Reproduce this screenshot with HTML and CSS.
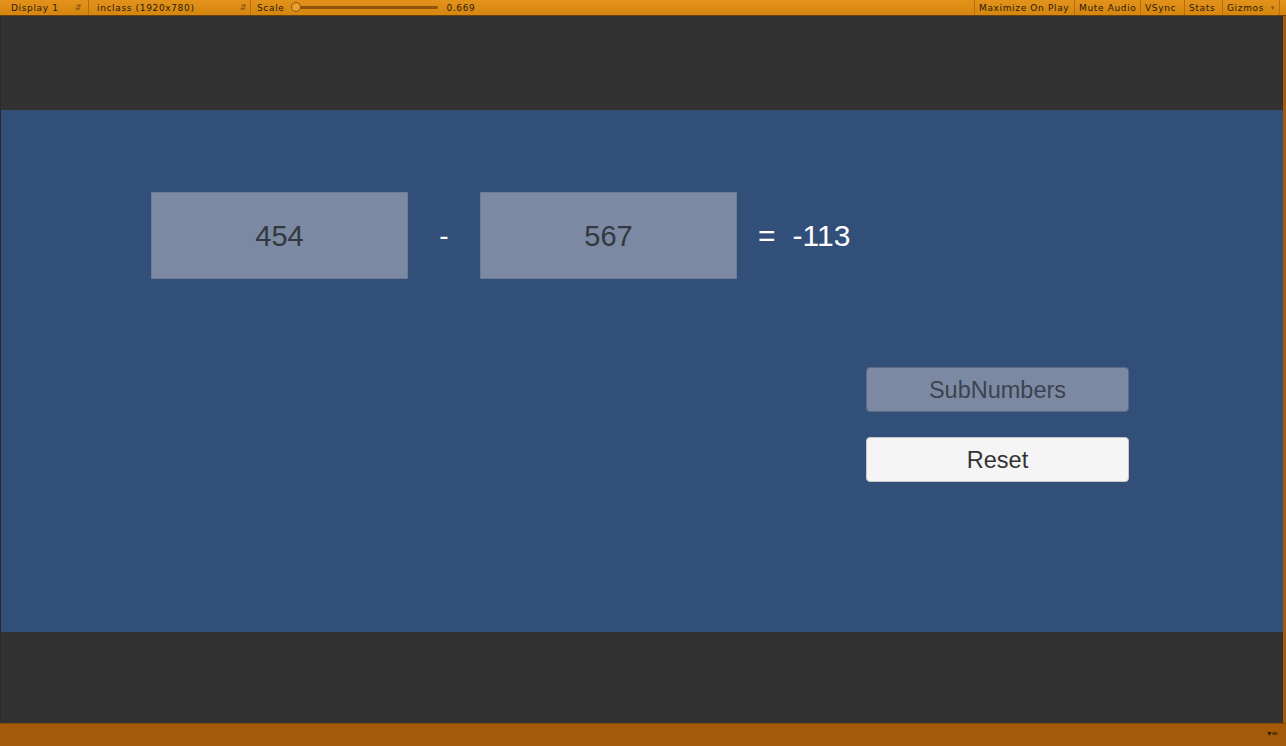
FILE: index.html
```html
<!DOCTYPE html>
<html>
<head>
<meta charset="utf-8">
<link rel="stylesheet" href="styles.css">
</head>
<body>
<div class="window">
  <div class="toolbar">
    <div class="tb-left">
      <div class="tb-item drop w-display"><span>Display 1</span><span class="updown">&#8693;</span></div>
      <div class="tb-item drop w-res"><span>inclass (1920x780)</span><span class="updown">&#8693;</span></div>
      <div class="tb-item scale">
        <span>Scale</span>
        <div class="slider"><div class="knob"></div></div>
        <span class="scale-val">0.669</span>
      </div>
    </div>
    <div class="tb-right">
      <div class="tb-btn w-max">Maximize On Play</div>
      <div class="tb-btn w-mute">Mute Audio</div>
      <div class="tb-btn w-vsync">VSync</div>
      <div class="tb-btn w-stats">Stats</div>
      <div class="tb-btn gizmos">Gizmos <span class="tri">&#9662;</span></div>
    </div>
  </div>
  <div class="view">
    <div class="letterbox top"></div>
    <div class="canvas">
      <div class="calc-row">
        <div class="field">454</div>
        <div class="op">-</div>
        <div class="field">567</div>
        <div class="result"><span class="eq">=</span><span class="val">-113</span></div>
      </div>
      <div class="buttons">
        <div class="btn btn-sub">SubNumbers</div>
        <div class="btn btn-reset">Reset</div>
      </div>
    </div>
    <div class="letterbox bottom"></div>
  </div>
  <div class="statusbar"><span class="menu-ico">&#9662;&#8801;</span></div>
</div>
</body>
</html>
```
FILE: styles.css
```css
html, body {
  margin: 0;
  padding: 0;
  width: 1286px;
  height: 746px;
  overflow: hidden;
  background: #a45a08;
}
.window {
  width: 1286px;
  height: 746px;
  display: flex;
  flex-direction: column;
  font-family: "DejaVu Sans", sans-serif;
}
.toolbar {
  height: 15px;
  flex: none;
  background: linear-gradient(#e3931c, #d5860f);
  border-bottom: 1px solid #6a400a;
  display: flex;
  justify-content: space-between;
  font-size: 9px;
  color: #2a1a05;
  letter-spacing: 0.65px;
}
.tb-left, .tb-right {
  display: flex;
  height: 15px;
}
.tb-item {
  display: flex;
  align-items: center;
  border-right: 1px solid #b86d0c;
  box-sizing: border-box;
  height: 15px;
}
.drop {
  padding-left: 11px;
  justify-content: space-between;
}
.w-display { width: 89px; padding-right: 6px; }
.w-res { width: 162px; padding-left: 8px; padding-right: 3px; }
.updown {
  font-size: 8px;
  color: #7a4d10;
}
.scale {
  padding-left: 6px;
  width: 224px;
  border-right: none;
  overflow: hidden;
  white-space: nowrap;
}
.slider {
  position: relative;
  flex: none;
  width: 146px;
  height: 3px;
  margin-left: 8px;
  margin-right: 8px;
  background: #8e560c;
  border-radius: 2px;
}
.knob {
  position: absolute;
  left: -1px;
  top: -4px;
  width: 8px;
  height: 8px;
  border-radius: 50%;
  background: #e8a030;
  border: 1px solid #8e560c;
}
.scale-val { white-space: nowrap; }
.tb-btn {
  display: flex;
  align-items: center;
  height: 15px;
  padding: 0 4px;
  border-left: 1px solid #b86d0c;
  box-sizing: border-box;
  white-space: nowrap;
}
.w-max { width: 100px; }
.w-mute { width: 66px; }
.w-vsync { width: 44px; }
.w-stats { width: 38px; }
.tb-btn.gizmos {
  width: 58px;
  margin-right: 6px;
  border-right: 1px solid #b86d0c;
  justify-content: space-between;
}
.tri {
  font-size: 7px;
  color: #8a5510;
}
.view {
  flex: none;
  height: 707px;
  width: 1283px;
  display: flex;
  flex-direction: column;
  background: #323232;
  border-left: 1px solid #2a2a2a;
  box-sizing: border-box;
}
.letterbox.top { height: 94px; flex: none; }
.letterbox.bottom { flex: 1; }
.canvas {
  height: 522px;
  flex: none;
  background: #324f7a;
  padding-left: 150px;
  box-sizing: border-box;
  font-family: "Liberation Sans", Arial, sans-serif;
}
.calc-row {
  display: flex;
  align-items: center;
  padding-top: 82px;
}
.field {
  width: 257px;
  height: 87px;
  background: #7b8aa2;
  border: 1px solid #6d7c95;
  box-sizing: border-box;
  display: flex;
  align-items: center;
  justify-content: center;
  padding-top: 2px;
  font-size: 29px;
  color: #333840;
}
.op {
  width: 72px;
  text-align: center;
  font-size: 28px;
  color: #ffffff;
}
.result {
  display: flex;
  align-items: center;
  margin-left: 21px;
  color: #ffffff;
  font-size: 30px;
}
.eq { margin-right: 17px; }
.buttons {
  margin-left: 715px;
  margin-top: 88px;
  display: flex;
  flex-direction: column;
  gap: 25px;
  width: 263px;
}
.btn {
  height: 45px;
  border-radius: 4px;
  box-sizing: border-box;
  display: flex;
  align-items: center;
  justify-content: center;
  padding-top: 2px;
  font-size: 23.5px;
}
.btn-sub {
  background: #7b8aa2;
  border: 1px solid #5c6b84;
  color: #3b4250;
}
.btn-reset {
  background: #f5f5f5;
  border: 1px solid #c8c8c8;
  color: #333333;
}
.statusbar {
  flex: 1;
  background: #a45a08;
  border-top: 1px solid #8a4a06;
  display: flex;
  justify-content: flex-end;
  align-items: flex-start;
  padding-right: 8px;
}
.menu-ico {
  font-family: "DejaVu Sans", sans-serif;
  font-size: 8px;
  color: #2a1a05;
  margin-top: 5px;
}
```
